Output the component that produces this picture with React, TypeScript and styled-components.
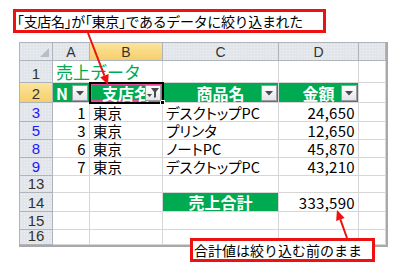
import React from 'react';
import styled, { createGlobalStyle, css } from 'styled-components';

const GlobalStyle = createGlobalStyle`
  html, body {
    margin: 0;
    padding: 0;
    background: #ffffff;
  }
  body {
    font-family: 'Noto Sans CJK JP', 'Noto Sans', sans-serif;
    color: #000;
  }
`;

const GREEN = '#00aa50';
const GRID = '#d6d6d6';
const HEAD_LINE = '#aeb4bb';
const RED = '#ee1111';

const Canvas = styled.div`
  position: relative;
  width: 400px;
  height: 270px;
  overflow: hidden;
  background: #fff;
`;

const Sheet = styled.div`
  margin: 42px 0 0 19px;
  width: 367px;
  display: grid;
  grid-template-columns: 34px 37px 73px 116px 80px 27px;
  grid-template-rows: 19px 22px 20px 19px 18px 18px 18px 17px 19px 18px 15px;
  border-right: 2px solid #a9a9a9;
  border-bottom: 2px solid #a9a9a9;
  overflow: hidden;
  font-size: 14.5px;
  line-height: 1;
`;

const headBg = css`
  background-color: #e2e5ea;
  background-image: radial-gradient(#eef0f3 0.6px, transparent 0.8px);
  background-size: 3px 3px;
`;

const Corner = styled.div`
  ${headBg};
  position: relative;
  border: 1px solid ${HEAD_LINE};
  &::after {
    content: '';
    position: absolute;
    right: 3px;
    bottom: 3px;
    border-style: solid;
    border-width: 0 0 9px 9px;
    border-color: transparent transparent #b9bec5 transparent;
  }
`;

const ColHead = styled.div<{ $active?: boolean }>`
  ${headBg};
  ${(p) => p.$active && css`
    background: linear-gradient(#fbe49c, #f6cf6a);
  `}
  border-top: 1px solid ${HEAD_LINE};
  border-right: 1px solid ${HEAD_LINE};
  border-bottom: 1px solid ${HEAD_LINE};
  display: flex;
  align-items: center;
  justify-content: center;
  font-family: 'Liberation Sans', sans-serif;
  font-size: 14px;
  color: #333;
`;

const RowHead = styled.div<{ $active?: boolean; $filtered?: boolean }>`
  ${headBg};
  ${(p) => p.$active && css`
    background: linear-gradient(#fbe49c, #f6cf6a);
  `}
  border-left: 1px solid ${HEAD_LINE};
  border-right: 1px solid ${HEAD_LINE};
  border-bottom: 1px solid ${HEAD_LINE};
  display: flex;
  align-items: flex-end;
  justify-content: center;
  padding-bottom: 1px;
  font-family: 'Liberation Sans', sans-serif;
  font-size: 15px;
  color: ${(p) => (p.$filtered ? '#1a1aff' : '#333')};
`;

const Cell = styled.div<{ $align?: 'left' | 'right' | 'center'; $green?: boolean; $span?: number }>`
  position: relative;
  border-right: 1px solid ${GRID};
  border-bottom: 1px solid ${GRID};
  display: flex;
  align-items: flex-end;
  padding: 0 3px 1px;
  white-space: nowrap;
  font-feature-settings: 'palt';
  justify-content: ${(p) => (p.$align === 'right' ? 'flex-end' : p.$align === 'center' ? 'center' : 'flex-start')};
  ${(p) => p.$span && css`grid-column: span ${p.$span};`}
  ${(p) => p.$green && css`
    background: ${GREEN};
    color: #fff;
    font-size: 16px;
    font-weight: 700;
    font-feature-settings: normal;
  `}
`;

const Num = styled.span`
  font-size: 15px;
  letter-spacing: 0.3px;
`;

const Title = styled.span`
  color: ${GREEN};
  font-size: 17px;
  padding-bottom: 1px;
  font-feature-settings: normal;
`;

const Selected = styled(Cell)`
  outline: 2px solid #000;
  outline-offset: -1px;
  box-shadow: inset 0 0 0 2px #e8489c;
  z-index: 1;
  &::after {
    content: '';
    position: absolute;
    right: -3px;
    bottom: -3px;
    width: 5px;
    height: 5px;
    background: #000;
    border: 1px solid #fff;
    box-sizing: border-box;
  }
`;

const FilterButton = styled.span`
  position: absolute;
  right: 1px;
  bottom: 1px;
  width: 16px;
  height: 16px;
  box-sizing: border-box;
  border: 1px solid #9a9ea4;
  background: linear-gradient(#ffffff, #e3e5e8);
  display: flex;
  align-items: center;
  justify-content: center;
  z-index: 2;
`;

const Callout = styled.div<{ $x: number; $y: number; $w: number }>`
  position: absolute;
  left: ${(p) => p.$x}px;
  top: ${(p) => p.$y}px;
  width: ${(p) => p.$w}px;
  height: 24px;
  box-sizing: border-box;
  border: 3px solid ${RED};
  background: #fff;
  display: flex;
  align-items: center;
  padding: 0 1px;
  font-size: 14px;
  white-space: nowrap;
  z-index: 5;
`;

const Narrow = styled.span`
  letter-spacing: -0.35px;
`;

const Bracket = styled.span`
  font-feature-settings: 'halt';
`;

const Overlay = styled.svg`
  position: absolute;
  left: 0;
  top: 0;
  z-index: 6;
  pointer-events: none;
`;

const Arrow = ({ x1, y1, x2, y2 }: { x1: number; y1: number; x2: number; y2: number }) => {
  const dx = x2 - x1;
  const dy = y2 - y1;
  const len = Math.hypot(dx, dy);
  const ux = dx / len;
  const uy = dy / len;
  const bx = x2 - ux * 10;
  const by = y2 - uy * 10;
  const px = -uy * 4.5;
  const py = ux * 4.5;
  return (
    <g>
      <line x1={x1} y1={y1} x2={bx} y2={by} stroke={RED} strokeWidth={2} />
      <polygon points={`${x2},${y2} ${bx + px},${by + py} ${bx - px},${by - py}`} fill={RED} />
    </g>
  );
};

const Triangle = () => (
  <svg width="8" height="5" viewBox="0 0 8 5">
    <polygon points="0,0 8,0 4,4.5" fill="#4a4a4a" />
  </svg>
);

const Funnel = () => (
  <svg width="12" height="11" viewBox="0 0 12 11">
    <polygon points="0,6 5,6 2.5,9" fill="#4a4a4a" />
    <polygon points="4,0 12,0 9,4 9,9 7,10 7,4" fill="#4a4a4a" />
  </svg>
);

type Row = {
  n: string;
  filtered?: boolean;
  a?: string;
  b?: string;
  c?: string;
  d?: string;
};

const rows: Row[] = [
  { n: '3', filtered: true, a: '1', b: '東京', c: 'デスクトップPC', d: '24,650' },
  { n: '5', filtered: true, a: '3', b: '東京', c: 'プリンタ', d: '12,650' },
  { n: '8', filtered: true, a: '6', b: '東京', c: 'ノートPC', d: '45,870' },
  { n: '9', filtered: true, a: '7', b: '東京', c: 'デスクトップPC', d: '43,210' },
  { n: '13' },
];

export default function App() {
  return (
    <Canvas>
      <GlobalStyle />
      <Sheet>
        <Corner />
        <ColHead>A</ColHead>
        <ColHead $active>B</ColHead>
        <ColHead>C</ColHead>
        <ColHead>D</ColHead>
        <ColHead />

        <RowHead>1</RowHead>
        <Cell $span={2}>
          <Title>売上データ</Title>
        </Cell>
        <Cell />
        <Cell />
        <Cell />

        <RowHead $active>2</RowHead>
        <Cell $green>
          N
          <FilterButton>
            <Triangle />
          </FilterButton>
        </Cell>
        <Selected $green $align="center">
          支店名
          <FilterButton>
            <Funnel />
          </FilterButton>
        </Selected>
        <Cell $green $align="center">
          商品名
          <FilterButton>
            <Triangle />
          </FilterButton>
        </Cell>
        <Cell $green $align="center">
          金額
          <FilterButton>
            <Triangle />
          </FilterButton>
        </Cell>
        <Cell />

        {rows.map((r) => (
          <React.Fragment key={r.n}>
            <RowHead $filtered={r.filtered}>{r.n}</RowHead>
            <Cell $align="right">
              <Num>{r.a}</Num>
            </Cell>
            <Cell>{r.b}</Cell>
            <Cell>{r.c}</Cell>
            <Cell $align="right">
              <Num>{r.d}</Num>
            </Cell>
            <Cell />
          </React.Fragment>
        ))}

        <RowHead>14</RowHead>
        <Cell />
        <Cell />
        <Cell $green $align="center">
          売上合計
        </Cell>
        <Cell $align="right">
          <Num>333,590</Num>
        </Cell>
        <Cell />

        <RowHead>15</RowHead>
        <Cell />
        <Cell />
        <Cell />
        <Cell />
        <Cell />

        <RowHead>16</RowHead>
        <Cell />
        <Cell />
        <Cell />
        <Cell />
        <Cell />
      </Sheet>

      <Callout $x={13} $y={9} $w={313}>
        <Narrow>
          <Bracket>「</Bracket>支店名<Bracket>」</Bracket>が<Bracket>「</Bracket>東京
          <Bracket>」</Bracket>であるデータに絞り込まれた
        </Narrow>
      </Callout>
      <Callout $x={190} $y={238} $w={185}>
        合計値は絞り込む前のまま
      </Callout>

      <Overlay width="400" height="270" viewBox="0 0 400 270">
        <Arrow x1={88} y1={33} x2={108} y2={85} />
        <Arrow x1={347} y1={238} x2={337} y2={210} />
      </Overlay>
    </Canvas>
  );
}
